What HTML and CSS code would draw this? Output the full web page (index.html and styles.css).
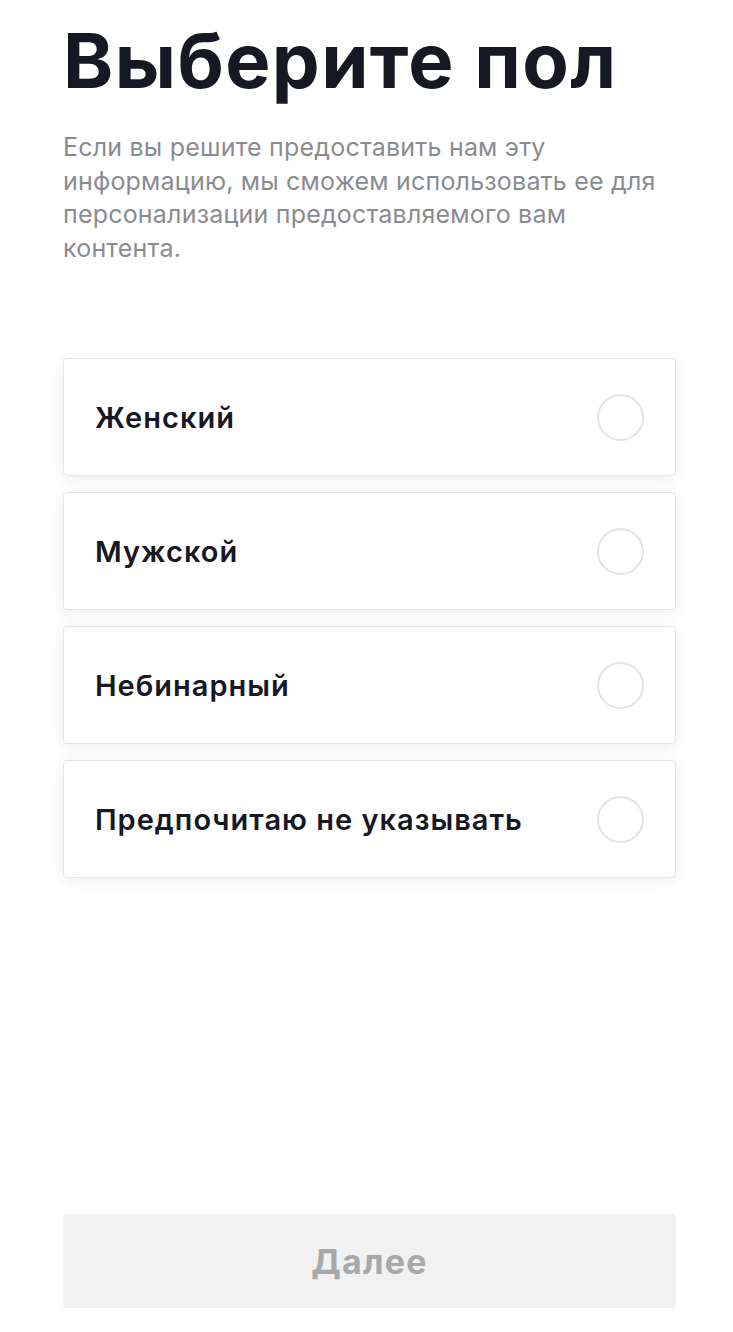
FILE: index.html
```html
<!DOCTYPE html>
<html lang="ru">
<head>
<meta charset="utf-8">
<title>Выберите пол</title>
<link rel="stylesheet" href="styles.css">
</head>
<body>
<main class="page">
  <h1 class="title">Выберите пол</h1>
  <p class="desc">Если вы решите предоставить нам эту информацию, мы сможем использовать ее для персонализации предоставляемого вам контента.</p>
  <ul class="options">
    <li class="option"><span class="label">Женский</span><span class="radio"></span></li>
    <li class="option"><span class="label">Мужской</span><span class="radio"></span></li>
    <li class="option"><span class="label">Небинарный</span><span class="radio"></span></li>
    <li class="option"><span class="label">Предпочитаю не указывать</span><span class="radio"></span></li>
  </ul>
  <button class="next" type="button">Далее</button>
</main>
</body>
</html>
```

FILE: styles.css
```css
* { box-sizing: border-box; }
html, body { margin: 0; padding: 0; background: #fff; }
body { font-family: Inter, "Noto Sans", sans-serif; color: #161823; }
.page {
  min-height: 100vh;
  padding: 22px 57px 24px 63px;
  display: flex;
  flex-direction: column;
}
.title {
  margin: 0;
  font-size: 76px;
  line-height: 76px;
  font-weight: 700;
  letter-spacing: 1.4px;
  color: #161823;
}
.desc {
  margin: 33px 0 0;
  font-size: 25px;
  line-height: 33.5px;
  font-weight: 400;
  letter-spacing: 0.2px;
  color: #8a8b91;
  max-width: 605px;
}
.options {
  list-style: none;
  margin: 93px 0 0;
  padding: 0;
  display: flex;
  flex-direction: column;
  gap: 16px;
}
.option {
  height: 118px;
  border: 1px solid #e6e6e7;
  border-radius: 4px;
  background: #fff;
  box-shadow: 0 3px 16px rgba(0, 0, 0, 0.07);
  display: flex;
  align-items: center;
  justify-content: space-between;
  padding: 0 31px 0 31px;
}
.label {
  font-size: 29px;
  font-weight: 600;
  letter-spacing: 1px;
  color: #161823;
}
.radio {
  width: 47px;
  height: 47px;
  border-radius: 50%;
  border: 2px solid #e3e3e4;
}
.next {
  margin-top: auto;
  height: 94px;
  width: 100%;
  border: 0;
  border-radius: 4px;
  background: #f1f1f2;
  color: #a8a8ab;
  font-family: Inter, "Noto Sans", sans-serif;
  font-size: 34px;
  font-weight: 700;
  letter-spacing: 1.2px;
}
```
